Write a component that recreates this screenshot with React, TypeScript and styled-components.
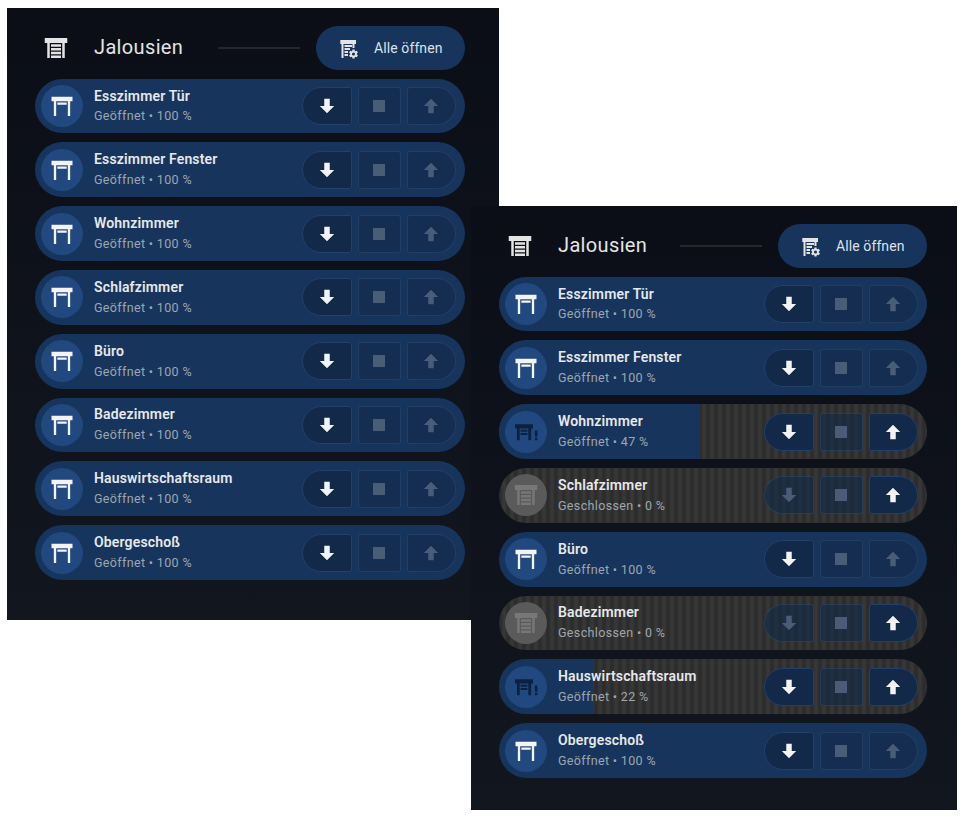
import React from "react";
import styled, { createGlobalStyle } from "styled-components";

const Global = createGlobalStyle`
  html, body { margin: 0; padding: 0; background: #fff; }
  body { font-family: Roboto, "Noto Sans", sans-serif; }
`;

const Desktop = styled.div`
  position: relative;
  width: 964px;
  height: 818px;
  overflow: hidden;
`;

const Panel = styled.section<{ $left: number; $top: number; $width: number; $height: number; $padRight: number }>`
  position: absolute;
  left: ${(p) => p.$left}px;
  top: ${(p) => p.$top}px;
  width: ${(p) => p.$width}px;
  height: ${(p) => p.$height}px;
  box-sizing: border-box;
  padding: 18px ${(p) => p.$padRight}px 0 28px;
  background: linear-gradient(180deg, #0b0e16 0%, #12161f 100%);
`;

const Header = styled.header`
  display: flex;
  align-items: center;
  height: 44px;
  margin-bottom: 8.7px;
`;

const HeaderIcon = styled.svg`
  width: 30px;
  height: 30px;
  margin-left: 6px;
  fill: #e4e4e4;
  flex: none;
`;

const Title = styled.h2`
  margin: 0 0 2px 23px;
  font-size: 20px;
  font-weight: 400;
  letter-spacing: 0.35px;
  color: #e4e4e4;
`;

const Rule = styled.div`
  width: 82px;
  height: 2px;
  margin: 0 16px 0 auto;
  background: #26272a;
`;

const OpenAll = styled.button`
  display: flex;
  align-items: center;
  width: 149px;
  height: 44px;
  box-sizing: border-box;
  padding: 0 0 0 21px;
  border: 0;
  border-radius: 22px;
  background: #16345c;
  color: #dde1e7;
  font: 400 14px Roboto, sans-serif;
  letter-spacing: 0.1px;
`;

const OpenAllIcon = styled.svg`
  width: 24px;
  height: 24px;
  margin-right: 13px;
  fill: #e4e4e4;
  flex: none;
`;

const RowList = styled.div`
  display: flex;
  flex-direction: column;
  gap: 9.09px;
`;

const Row = styled.div<{ $closed: boolean }>`
  position: relative;
  height: 54.71px;
  border-radius: 28px;
  overflow: hidden;
  background: ${(p) =>
    p.$closed
      ? "repeating-linear-gradient(90deg, #2c2c2c 0px, #2c2c2c 2px, #373737 4px, #373737 6px, #2c2c2c 8px)"
      : "#16345c"};
`;

const Fill = styled.div`
  position: absolute;
  left: 0;
  top: 0;
  bottom: 0;
  background: #16345c;
`;

const RowBody = styled.div`
  position: relative;
  display: flex;
  align-items: center;
  height: 100%;
  padding: 0 9.5px 0 6px;
`;

const Badge = styled.div<{ $state: "open" | "partial" | "closed" }>`
  display: flex;
  align-items: center;
  justify-content: center;
  width: 42px;
  height: 42px;
  margin-right: 11px;
  border-radius: 50%;
  flex: none;
  background: ${(p) => (p.$state === "closed" ? "#5a5a5a" : "#21497f")};
  svg {
    width: ${(p) => (p.$state === "closed" ? 30 : 28)}px;
    height: ${(p) => (p.$state === "closed" ? 30 : 28)}px;
    fill: ${(p) => (p.$state === "open" ? "#f2f4f7" : p.$state === "partial" ? "#0c2140" : "#777777")};
  }
`;

const Labels = styled.div`
  flex: 1;
  min-width: 0;
  padding-bottom: 1.11px;
`;

const Name = styled.div`
  font-size: 14px;
  font-weight: 600;
  line-height: 20px;
  letter-spacing: 0.16px;
  color: #e6e8eb;
  margin-bottom: 1.8px;
`;

const Status = styled.div`
  font-size: 12.5px;
  line-height: 18px;
  letter-spacing: 0.35px;
  color: #a0a6ae;
`;

const Controls = styled.div`
  display: flex;
  gap: 6px;
`;

const Control = styled.div<{ $pos: "start" | "mid" | "end"; $active: boolean }>`
  display: flex;
  align-items: center;
  justify-content: center;
  box-sizing: border-box;
  height: 38px;
  width: ${(p) => (p.$pos === "mid" ? 43 : p.$pos === "start" ? 50 : 49)}px;
  border: 1px solid ${(p) => (p.$active ? "#234069" : "rgba(70, 100, 140, 0.3)")};
  border-radius: ${(p) =>
    p.$pos === "start" ? "20px 3px 3px 20px" : p.$pos === "end" ? "3px 20px 20px 3px" : "3px"};
  background: ${(p) => (p.$active ? "#12294a" : "rgba(20, 42, 74, 0.62)")};
  svg {
    width: 22px;
    height: 22px;
    fill: ${(p) => (p.$active ? "#f2f3f5" : "#4a5d78")};
  }
`;

const StopGlyph = styled.svg`
  && {
    width: 24px;
    height: 24px;
  }
`;

const SHUTTER = "M3 4H21V8H19V20H17V8H7V20H5V8H3V4M8 9H16V11H8V9M8 12H16V14H8V12M8 15H16V17H8V15M8 18H16V20H8V18Z";
const SHUTTER_OPEN = "M3 4H21V8H19V20.5H17V8H7V20.5H5V8H3V4M8 9H16V11H8V9Z";
const SHUTTER_ALERT =
  "M2.6 5.3H18V9H16.4V19H14V9H6.6V19H4.2V9H2.6ZM7.4 10H13.2V11.8H7.4ZM7.4 12.8H13.2V14.6H7.4ZM19.6 10.8H21.8V16H19.6ZM19.6 17H21.8V19H19.6Z";
const SHUTTER_COG =
  "M3.3 4H19V8H17.5V12H15.5V8H6.5V22H4.5V8H3.3ZM7.5 9H15V11H7.5ZM7.5 12H13V14H7.5ZM7.5 15H11V17H7.5ZM7.5 18H11V20H7.5Z";
const COG =
  "M12,15.5A3.5,3.5 0 0,1 8.5,12A3.5,3.5 0 0,1 12,8.5A3.5,3.5 0 0,1 15.5,12A3.5,3.5 0 0,1 12,15.5M19.43,12.97C19.47,12.65 19.5,12.33 19.5,12C19.5,11.67 19.47,11.34 19.43,11L21.54,9.37C21.73,9.22 21.78,8.95 21.66,8.73L19.66,5.27C19.54,5.05 19.27,4.96 19.05,5.05L16.56,6.05C16.04,5.66 15.5,5.32 14.87,5.07L14.5,2.42C14.46,2.18 14.25,2 14,2H10C9.75,2 9.54,2.18 9.5,2.42L9.13,5.07C8.5,5.32 7.96,5.66 7.44,6.05L4.95,5.05C4.73,4.96 4.46,5.05 4.34,5.27L2.34,8.73C2.21,8.95 2.27,9.22 2.46,9.37L4.57,11C4.53,11.34 4.5,11.67 4.5,12C4.5,12.33 4.53,12.65 4.57,12.97L2.46,14.63C2.27,14.78 2.21,15.05 2.34,15.27L4.34,18.73C4.46,18.95 4.73,19.03 4.95,18.95L7.44,17.94C7.96,18.34 8.5,18.68 9.13,18.93L9.5,21.58C9.54,21.82 9.75,22 10,22H14C14.25,22 14.46,21.82 14.5,21.58L14.87,18.93C15.5,18.67 16.04,18.34 16.56,17.94L19.05,18.95C19.27,19.03 19.54,18.95 19.66,18.73L21.66,15.27C21.78,15.05 21.73,14.78 21.54,14.63L19.43,12.97Z";

const ARROW_DOWN = "M9,4H15V12H19.84L12,19.84L4.16,12H9V4Z";
const ARROW_UP = "M15,20H9V12H4.16L12,4.16L19.84,12H15V20Z";
const STOP = "M18,18H6V6H18V18Z";

type Shutter = { name: string; pos: number };

const Item: React.FC<Shutter> = ({ name, pos }) => {
  const state = pos === 100 ? "open" : pos === 0 ? "closed" : "partial";
  const label = pos === 0 ? "Geschlossen" : "Geöffnet";
  const icon = state === "open" ? SHUTTER_OPEN : state === "closed" ? SHUTTER : SHUTTER_ALERT;
  return (
    <Row $closed={state !== "open"}>
      {state === "partial" && <Fill style={{ width: `${pos}%` }} />}
      <RowBody>
        <Badge $state={state}>
          <svg viewBox="0 0 24 24">
            <path d={icon} />
          </svg>
        </Badge>
        <Labels>
          <Name>{name}</Name>
          <Status>
            {label} • {pos} %
          </Status>
        </Labels>
        <Controls>
          <Control $pos="start" $active={pos > 0}>
            <svg viewBox="0 0 24 24">
              <path d={ARROW_DOWN} />
            </svg>
          </Control>
          <Control $pos="mid" $active={false}>
            <StopGlyph viewBox="0 0 24 24">
              <path d={STOP} />
            </StopGlyph>
          </Control>
          <Control $pos="end" $active={pos < 100}>
            <svg viewBox="0 0 24 24">
              <path d={ARROW_UP} />
            </svg>
          </Control>
        </Controls>
      </RowBody>
    </Row>
  );
};

const CardContent: React.FC<{ items: Shutter[] }> = ({ items }) => (
  <>
    <Header>
      <HeaderIcon viewBox="0 0 24 24">
        <path d={SHUTTER} />
      </HeaderIcon>
      <Title>Jalousien</Title>
      <Rule />
      <OpenAll>
        <OpenAllIcon viewBox="0 0 24 24">
          <path d={SHUTTER_COG} />
          <g transform="translate(11.1 12.6) scale(0.45)">
            <path d={COG} fillRule="evenodd" />
          </g>
        </OpenAllIcon>
        Alle öffnen
      </OpenAll>
    </Header>
    <RowList>
      {items.map((s) => (
        <Item key={s.name} {...s} />
      ))}
    </RowList>
  </>
);

const first: Shutter[] = [
  { name: "Esszimmer Tür", pos: 100 },
  { name: "Esszimmer Fenster", pos: 100 },
  { name: "Wohnzimmer", pos: 100 },
  { name: "Schlafzimmer", pos: 100 },
  { name: "Büro", pos: 100 },
  { name: "Badezimmer", pos: 100 },
  { name: "Hauswirtschaftsraum", pos: 100 },
  { name: "Obergeschoß", pos: 100 },
];

const second: Shutter[] = [
  { name: "Esszimmer Tür", pos: 100 },
  { name: "Esszimmer Fenster", pos: 100 },
  { name: "Wohnzimmer", pos: 47 },
  { name: "Schlafzimmer", pos: 0 },
  { name: "Büro", pos: 100 },
  { name: "Badezimmer", pos: 0 },
  { name: "Hauswirtschaftsraum", pos: 22 },
  { name: "Obergeschoß", pos: 100 },
];

export default function App() {
  return (
    <Desktop>
      <Global />
      <Panel $left={7} $top={8} $width={492} $height={612} $padRight={34}>
        <CardContent items={first} />
      </Panel>
      <Panel $left={471} $top={206} $width={486} $height={604} $padRight={30}>
        <CardContent items={second} />
      </Panel>
    </Desktop>
  );
}
